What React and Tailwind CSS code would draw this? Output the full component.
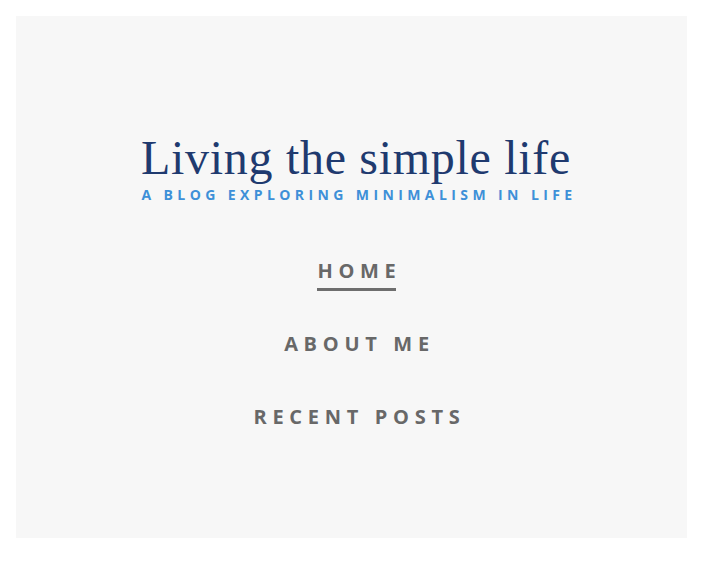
import React from 'react';

const links = ['Home', 'About me', 'Recent posts'];

const App = () => {
  return (
    <div className="min-h-[562px] bg-white pt-4 pl-4">
      <div className="w-[671px] h-[522px] bg-[#f7f7f7] flex flex-col items-center pl-[9px] pt-[118px]">
        <h1 className="text-[48px] leading-[48px] tracking-[0.7px] text-[#1f3a6f] font-['Liberation_Serif',serif]">
          Living the simple life
        </h1>
        <p className="mt-[5px] pl-[6px] text-[14px] leading-4 font-bold uppercase tracking-[4.4px] text-[#3e90d8] font-['Open_Sans',sans-serif]">
          A blog exploring minimalism in life
        </p>
        <nav className="mt-[55px] pl-[7px] flex flex-col items-center font-['Open_Sans',sans-serif]">
          {links.map((link, i) => (
            <div key={link} className="h-[73px] flex flex-col items-center">
              <a
                href="#"
                className="inline-flex flex-col text-[20px] leading-[26px] font-bold uppercase tracking-[5.7px] text-[#686868]"
              >
                <span>{link}</span>
                {i === 0 && <span className="mt-[4px] mr-[5.7px] h-[3px] bg-[#6e6e6e]"></span>}
              </a>
            </div>
          ))}
        </nav>
      </div>
    </div>
  );
};

export default App;
